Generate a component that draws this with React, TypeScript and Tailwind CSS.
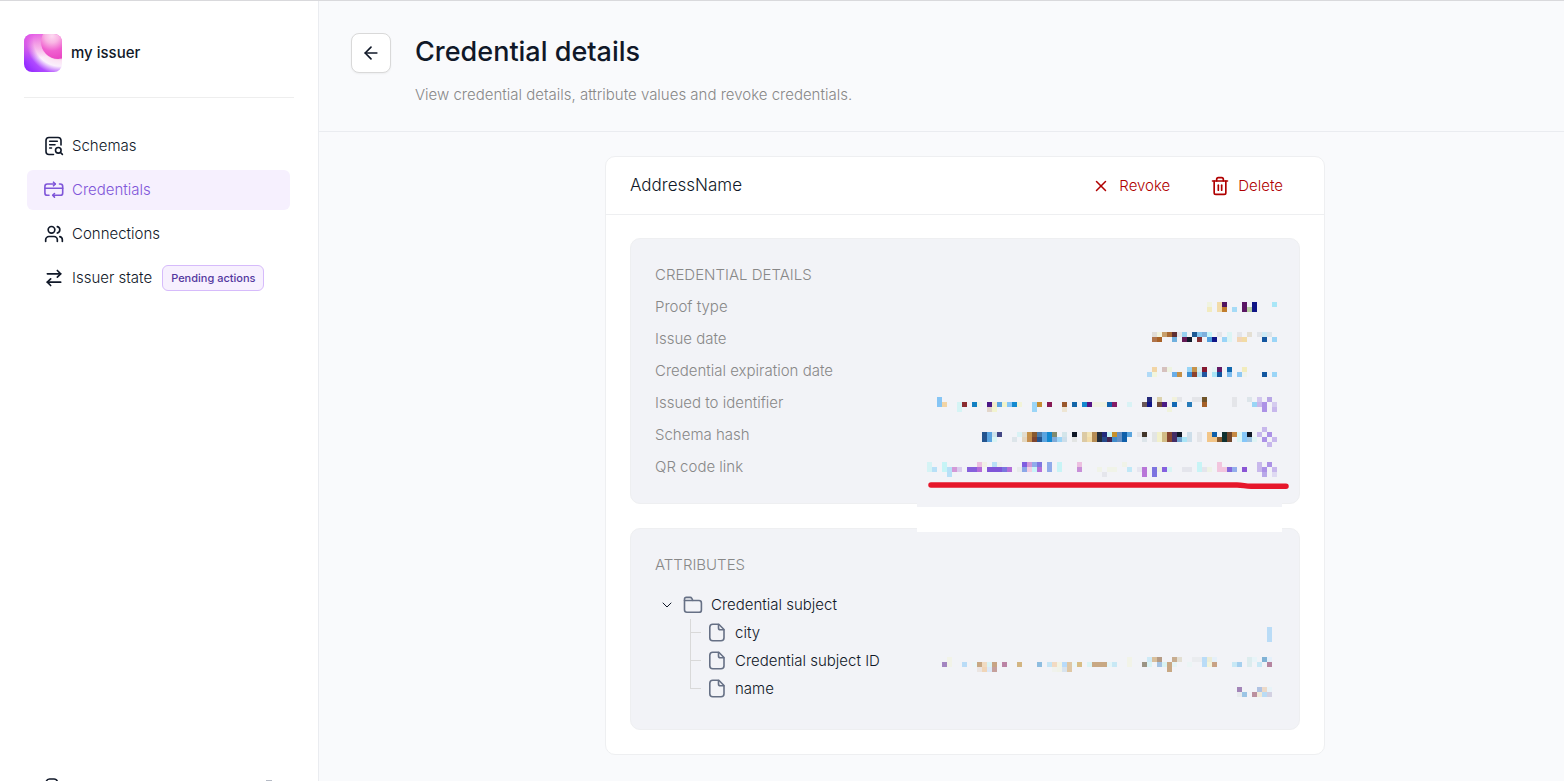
import React from "react";
import { ArrowLeft, ArrowRightLeft, ChevronDown, Trash2, Users, X } from "lucide-react";

/* Redacted values are drawn as mosaics on a 5px grid.
   Each entry: column, row, colour, columns wide, rows high. */
type Cell = [number, number, string, number?, number?];

const proofType: Cell[] = [
  [58, 0, "f0f3e0"], [60, 0, "f2dba8", 1, 2], [61, 0, "501560"], [65, 0, "5a1663", 1, 2], [67, 0, "0f1585", 1, 2], [71, 0, "a9e6f7"],
  [58, 1, "f2ebc0"], [61, 1, "c07c2d"], [63, 1, "a6dbf7"], [66, 1, "b8cfa2"],
];

const issueDate: Cell[] = [
  [47, 0, "e1ddd8"], [48, 0, "f2f3de"], [49, 0, "c89f6a"], [50, 0, "a96a33"], [51, 0, "5f2f33"], [52, 0, "e5e6ea"], [53, 0, "98d2f1"],
  [55, 0, "1f5a94"], [56, 0, "86c6ef"], [57, 0, "7fb0dc"], [58, 0, "c6f4f8"], [60, 0, "e4e5e9"], [62, 0, "dcf4f4", 1, 2],
  [64, 0, "e4e5e9"], [66, 0, "e4dfd3"], [68, 0, "e1e4e9"], [69, 0, "cdeaf5"], [70, 0, "dde5ea"],
  [47, 1, "b0744a"], [48, 1, "a96227"], [51, 1, "70b0de"], [53, 1, "641a55"], [54, 1, "121a2c"], [56, 1, "822d31"], [58, 1, "519fdd"],
  [59, 1, "101587"], [61, 1, "9ad4f7"], [64, 1, "f2d5b5"], [65, 1, "f2dba5"], [69, 1, "1356a0"], [71, 1, "9bd5f7"],
];

const expirationDate: Cell[] = [
  [47, 0, "f2d5a6"], [49, 0, "d6c1be"], [50, 0, "eef3e1"], [54, 0, "98d5f7"], [55, 0, "c6924a"], [56, 0, "d9edf0"], [57, 0, "851830"],
  [59, 0, "e6f5f5"], [60, 0, "641a66"], [62, 0, "1267ae"], [65, 0, "f2ecbd"],
  [46, 1, "b1daf7"], [47, 1, "f2f5dd"], [51, 1, "6aaee8"], [52, 1, "c69148"], [54, 1, "3c8fd2"], [55, 1, "8d432f"], [56, 1, "b4e4f5"],
  [57, 1, "2256a0"], [59, 1, "aae5f7"], [60, 1, "1356a0"], [62, 1, "7dbcef"], [64, 1, "8fc9f3"], [65, 1, "f0f2ec"], [69, 1, "1356a0"], [71, 1, "9bd5f7"],
];

const identifier: Cell[] = [
  [4, 0, "86c5f5", 1, 2], [46, 0, "252a7a"], [48, 0, "dcd2ae"], [51, 0, "f2f2dc"], [52, 0, "e4e5e9"], [55, 0, "e4e5e9", 2], [57, 0, "70542a"],
  [63, 0, "e4e5e9", 1, 2], [66, 0, "dde5ea"], [68, 0, "d3c8ee"], [70, 0, "b8a6e6"],
  [5, 1, "f2d4a5"], [8, 1, "d5f4f5", 1, 2], [9, 1, "8a2c31"], [11, 1, "1380c2"], [12, 1, "edf4e8"], [14, 1, "4a1685"], [15, 1, "f2ebcb"],
  [16, 1, "5ba4e0"], [17, 1, "f2f3c9"], [18, 1, "88c6f6"], [19, 1, "148ad0"], [20, 1, "f2f3d8"], [23, 1, "9bd5f7", 1, 2], [24, 1, "c68d33"],
  [26, 1, "871a55"], [29, 1, "9a572c"], [31, 1, "1465a8"], [33, 1, "1488cf"], [34, 1, "551685"], [35, 1, "f0f2e0", 3], [38, 1, "1263ab"],
  [39, 1, "851c66"], [42, 1, "d9f2f5"], [45, 1, "6a5757"], [46, 1, "101587"], [48, 1, "704a38"], [49, 1, "4c1d85"], [51, 1, "1369b3"],
  [54, 1, "287bb9"], [57, 1, "a66028"], [67, 1, "9ad5f5"], [68, 1, "c8b8ec"], [69, 1, "ac92e6", 1, 2], [71, 1, "d5ccef"],
  [14, 2, "e3d6cb"], [15, 2, "f2f3cf"], [29, 2, "eee5d3"], [50, 2, "f0f3dc"], [71, 2, "c8b8ec"],
];

const schemaHash: Cell[] = [
  [69, 0, "c8b8ec"],
  [13, 1, "24548f", 1, 2], [14, 1, "5ba4e0", 1, 2], [15, 1, "cde2ea"], [16, 1, "434785"], [20, 1, "d9f2f5"], [21, 1, "e2ddcf"], [22, 1, "c6924a"],
  [23, 1, "875930"], [24, 1, "4a7bab"], [25, 1, "5ba4e0", 1, 2], [26, 1, "1489d0", 1, 2], [27, 1, "818a6d"], [29, 1, "d3e5ea"], [31, 1, "101827"],
  [33, 1, "dccaa5", 1, 2], [34, 1, "f2e3b5"], [35, 1, "b58c55", 1, 2], [36, 1, "222c3b", 1, 2], [37, 1, "212a7d"], [38, 1, "c6f4f8"],
  [39, 1, "c6902d"], [40, 1, "6590c5", 1, 2], [41, 1, "0f5faa", 1, 2], [42, 1, "5ba4dd"], [44, 1, "e4e5e9"], [45, 1, "42352a"],
  [47, 1, "e3e5e4", 1, 2], [48, 1, "f2f0ca", 1, 2], [49, 1, "d2bc86", 1, 2], [50, 1, "87452f", 1, 2], [51, 1, "432c66", 1, 2], [52, 1, "101827"],
  [54, 1, "cddeea", 1, 2], [56, 1, "e4e5e9", 1, 2], [58, 1, "f2c588", 1, 2], [59, 1, "0f5faa"], [61, 1, "0f3030", 1, 2], [62, 1, "70472d", 1, 2],
  [63, 1, "c68a44"], [64, 1, "d9f4f5", 1, 2], [65, 1, "86c6f8", 1, 2], [66, 1, "101827"], [68, 1, "c8b8ec"], [70, 1, "ac92e6"],
  [15, 2, "d9f4f5"], [19, 2, "dde5ea"], [21, 2, "e3d6be"], [22, 2, "c68f4f"], [23, 2, "7d4430"], [24, 2, "24548f"], [27, 2, "80abd8"],
  [28, 2, "9bd5f7"], [29, 2, "cddeea"], [31, 2, "e3e5e4"], [34, 2, "f2dba8"], [37, 2, "24498a"], [38, 2, "432450"], [39, 2, "408ccb"],
  [45, 2, "dde5ea"], [52, 2, "70a4d0"], [53, 2, "aae5f7"], [59, 2, "f2c588"], [60, 2, "885a2d"], [66, 2, "a0c5e3"], [67, 2, "e0f4f5"],
  [69, 2, "ac92e6"], [71, 2, "c8b8ec"], [70, 3, "c8b8ec"],
];

const qrLink: Cell[] = [
  [2, 0, "d5f3f5", 1, 2], [5, 0, "c6f4f6", 1, 2], [12, 0, "ecbfe0"], [13, 0, "f0f0e5"], [15, 0, "b8e0f7"], [16, 0, "eef1ee"], [21, 0, "7f5ee0"],
  [22, 0, "d099d8"], [23, 0, "90abea"], [24, 0, "7f76e0"], [26, 0, "90abea", 1, 2], [28, 0, "c8f4f6", 1, 2], [32, 0, "ecbfe0"],
  [41, 0, "f0f3e8"], [56, 0, "c8f4f6", 1, 2], [60, 0, "f2c5de", 1, 2], [68, 0, "c8b8ec", 1, 2], [70, 0, "ac92e6"],
  [3, 1, "b8e0f7"], [6, 1, "b8e0f7", 1, 2], [7, 1, "d399d8"], [8, 1, "dacced"], [10, 1, "8660dc", 2], [12, 1, "b46bd8"], [14, 1, "7f55d8", 3],
  [17, 1, "7a76de"], [18, 1, "b46fd8"], [20, 1, "e8ebec"], [21, 1, "8ba7e8"], [22, 1, "f2cfe2"], [23, 1, "c8f4f8"], [24, 1, "b46fd8"],
  [32, 1, "c88fd8"], [36, 1, "f0f3e8"], [38, 1, "f0f3e8", 2], [42, 1, "c0e8f7"], [44, 1, "e6e6f0"], [45, 1, "b876d8", 1, 2],
  [47, 1, "7d74e0", 1, 2], [48, 1, "eef3e5"], [49, 1, "8560e0"], [50, 1, "d9f5f5"], [53, 1, "e4e5ec", 2], [57, 1, "e4e5ec"], [58, 1, "eef3e5"],
  [61, 1, "f2c5de"], [62, 1, "8468dc"], [63, 1, "93aeec"], [65, 1, "8a55d5"], [69, 1, "ac92e6"], [71, 1, "c8b8ec"],
  [37, 2, "e5e6ec"], [69, 2, "b8a8e8"], [71, 2, "dfdaf2"],
];

const city: Cell[] = [[70, 0, "badcf7", 1, 3]];

const subjectId: Cell[] = [
  [6, 0, "f2f3e8", 1, 2], [42, 0, "f2f3e8", 1, 2], [46, 0, "ceeaf7"], [47, 0, "d9bf9c"], [48, 0, "b59b85"], [51, 0, "c8ad90"], [52, 0, "e3dfd3"],
  [55, 0, "eaecef", 2], [57, 0, "badcf7", 1, 2], [58, 0, "ebecd8"], [59, 0, "e5f0fa"], [66, 0, "dcecee", 1, 2], [67, 0, "e8f4f8"],
  [69, 0, "80b2d5"], [70, 0, "e5f0fa"],
  [5, 1, "a385c0"], [9, 1, "badcf7"], [11, 1, "ebf6f8"], [12, 1, "c8a884"], [13, 1, "f0dbc2"], [14, 1, "daf3f5"], [15, 1, "c7a484"],
  [17, 1, "bb84a5"], [20, 1, "d3b582"], [24, 1, "8ebde0"], [26, 1, "c6e5f5"], [27, 1, "f2dac2"], [28, 1, "f2f3e2"], [29, 1, "b8dbfa"],
  [30, 1, "dfc7a5", 1, 2], [31, 1, "ebf6f5"], [32, 1, "d8bd85"], [34, 1, "d9f3f5"], [35, 1, "c8a884", 3], [38, 1, "e5f5f8"], [39, 1, "c8e8f5"],
  [45, 1, "9c9485"], [46, 1, "daf3f5"], [48, 1, "a5c3e3"], [49, 1, "d9f3f3"], [50, 1, "c8a884", 1, 2], [51, 1, "e5f3f5"], [54, 1, "ebf5f5"],
  [58, 1, "f2f3dc"], [59, 1, "c8a285"], [63, 1, "c8e8f5"], [64, 1, "a5cfee"], [68, 1, "c8e8f5"], [70, 1, "b585a0"],
  [12, 2, "ebe5e2"], [13, 2, "f0d5b8"], [14, 2, "dce8f8"], [15, 2, "c5a09c"], [27, 2, "f0f2ed"], [28, 2, "f0f2e8"], [29, 2, "d8e3ee"],
];

const personName: Cell[] = [
  [64, 0, "a385b8"], [68, 0, "b0c3e3"], [69, 0, "edd9c8"], [70, 0, "e8f3f8"],
  [64, 1, "e8ebee"], [65, 1, "9cc5e5"], [67, 1, "bb909f"], [68, 1, "f0e9d8"], [69, 1, "badcf5"], [70, 1, "d3d1e2"],
];

function Mosaic({ cells, top, height }: { cells: Cell[]; top: number; height: number }) {
  return (
    <svg width="360" height={height} shapeRendering="crispEdges" aria-hidden="true" className="shrink-0">
      {cells.map(([col, row, color, w = 1, h = 1]) => (
        <rect key={`${col}-${row}`} x={col * 5} y={top + row * 5} width={w * 5} height={h * 5} fill={`#${color}`} />
      ))}
    </svg>
  );
}

const stroke = {
  width: 20,
  height: 20,
  viewBox: "0 0 20 20",
  fill: "none",
  stroke: "currentColor",
  strokeWidth: 1.6,
  strokeLinecap: "round" as const,
  strokeLinejoin: "round" as const,
  "aria-hidden": true,
};

const SchemaIcon = () => (
  <svg {...stroke} className="shrink-0">
    <path d="M17 9V4.500c0-2-1-3-3-3H5c-2 0-3 1-3 3v11c0 2 1 3 3 3h4.500" />
    <path d="M5.700 5.300h7.600M5.700 8.700h5.300M5.700 12h1.800" />
    <circle cx="14.300" cy="14.300" r="2.800" />
    <path d="m16.500 16.500 1.900 1.900" />
  </svg>
);

const CredentialIcon = () => (
  <svg {...stroke} className="shrink-0">
    <path d="M5 15.300H3.300c-1.600 0-2.400-.8-2.400-2.400V6.400C.9 4.800 1.700 4 3.300 4h8M15.500 4h.8c1.600 0 2.400.8 2.400 2.400v6.500c0 1.600-.8 2.400-2.400 2.400H9" />
    <path d="M.9 8.300h17.800" />
    <path d="m9.500 2.200 1.800 1.800-1.800 1.800M10.500 13.500l-1.800 1.800 1.800 1.800" />
  </svg>
);

const FolderIcon = () => (
  <svg {...stroke} className="shrink-0 text-[#667085]">
    <path d="M1.500 14.800V4.200c0-1.200.6-1.800 1.800-1.800h3.800c.8 0 1.300.3 1.700 1l1 2.100h6.200c1.600 0 2.400.8 2.400 2.400v7c0 1.600-.8 2.400-2.400 2.400H3.900c-1.600 0-2.400-.8-2.400-2.500Z" />
    <path d="M1.500 5.500h8.300" />
  </svg>
);

const FileIcon = () => (
  <svg {...stroke} className="shrink-0 text-[#667085]">
    <path d="M11.800 1.300H5.800C3.800 1.300 2.800 2.300 2.800 4.300v10.400c0 2 1 3 3 3h8.200c2 0 3-1 3-3V6.500Z" />
    <path d="M11.500 1.500v3.400c0 1.300.6 1.900 1.900 1.900h3.300" />
  </svg>
);

function NavItem({ icon, label, active, badge }: { icon: React.ReactNode; label: string; active?: boolean; badge?: string }) {
  return (
    <li>
      <a
        href="#"
        aria-current={active ? "page" : undefined}
        className={
          active
            ? "flex h-10 items-center gap-2 rounded-md bg-[#f6f0fe] pl-[17px] text-[#7f56d9]"
            : "flex h-10 items-center gap-2 rounded-md pl-[17px] text-[#101828]"
        }
      >
        {icon}
        <span>{label}</span>
        {badge && (
          <span className="ml-0.5 rounded-md border border-[#d6bbfb] bg-[#f7f0fe] px-2 py-[3px] text-[11px] leading-[18px] font-medium text-[#53389e]">
            {badge}
          </span>
        )}
      </a>
    </li>
  );
}

function DetailRow({ label, cells, top }: { label: string; cells: Cell[]; top: number }) {
  return (
    <div className="flex h-8 items-center justify-between">
      <dt>{label}</dt>
      <dd>
        <Mosaic cells={cells} top={top} height={32} />
      </dd>
    </div>
  );
}

function TreeLeaf({ label, cells, top, last }: { label: string; cells: Cell[]; top: number; last?: boolean }) {
  return (
    <li className="flex h-7 items-center">
      <svg width="17" height="28" stroke="#d9d9d9" fill="none" shapeRendering="crispEdges" aria-hidden="true" className="ml-[35px] shrink-0">
        <path d={last ? "M.5 0v13.500h10" : "M.5 0v28M.5 13.500h10"} />
      </svg>
      <FileIcon />
      <span className="ml-2 flex-1">{label}</span>
      <Mosaic cells={cells} top={top} height={28} />
    </li>
  );
}

export default function App() {
  return (
    <div className="flex h-screen overflow-hidden border-t border-[#d9d9dc] bg-[#f9fafc] font-['Inter',sans-serif] text-[15px] leading-5 font-light text-[#101828]">
      <aside className="flex w-[319px] shrink-0 flex-col border-r border-[#eaecf0] bg-white">
        <div className="mx-6 flex h-[97px] shrink-0 items-center gap-[9px] border-b border-[#eeeeee] pt-[7px]">
          <svg width="38" height="38" viewBox="0 0 38 38" role="img" aria-label="my issuer logo" className="shrink-0">
            <defs>
              <radialGradient id="ring" gradientUnits="userSpaceOnUse" cx="36" cy="6" r="46">
                <stop offset="0.350" stopColor="#f79adf" />
                <stop offset="0.450" stopColor="#fbe3f3" />
                <stop offset="0.570" stopColor="#fbf0fc" />
                <stop offset="0.740" stopColor="#b04bff" />
                <stop offset="1" stopColor="#8d22ff" />
              </radialGradient>
              <linearGradient id="veil" x1="0.200" y1="0" x2="0.450" y2="1">
                <stop offset="0" stopColor="#e455e6" stopOpacity="0.950" />
                <stop offset="0.300" stopColor="#ee6ad8" stopOpacity="0.550" />
                <stop offset="0.650" stopColor="#f25bd6" stopOpacity="0" />
              </linearGradient>
              <radialGradient id="ball" gradientUnits="userSpaceOnUse" cx="28" cy="2" r="23">
                <stop offset="0" stopColor="#fdd9f1" />
                <stop offset="0.300" stopColor="#f9b5e4" />
                <stop offset="0.650" stopColor="#f060d0" />
                <stop offset="1" stopColor="#ea48c4" />
              </radialGradient>
              <clipPath id="tile">
                <rect width="38" height="38" rx="8" />
              </clipPath>
            </defs>
            <g clipPath="url(#tile)">
              <rect width="38" height="38" fill="url(#ring)" />
              <rect width="38" height="38" fill="url(#veil)" />
              <circle cx="34" cy="8" r="17" fill="url(#ball)" />
            </g>
          </svg>
          <span className="font-medium">my issuer</span>
        </div>
        <nav className="flex-1 pt-7 pr-7 pl-[27px]">
          <ul className="flex flex-col gap-1">
            <NavItem icon={<SchemaIcon />} label="Schemas" />
            <NavItem icon={<CredentialIcon />} label="Credentials" active />
            <NavItem icon={<Users size={20} className="shrink-0" />} label="Connections" />
            <NavItem icon={<ArrowRightLeft size={20} className="shrink-0" />} label="Issuer state" badge="Pending actions" />
          </ul>
        </nav>
        <div className="flex h-1 shrink-0 justify-between overflow-hidden pr-[45px] pl-11" aria-hidden="true">
          <svg width="20" height="4" fill="none" stroke="#101828" strokeWidth="1.600">
            <path d="M2 5c.6-2 1.500-3 3.500-3H10c2 0 3 1 3.500 3" />
          </svg>
          <svg width="8" height="4" fill="#b5bac5">
            <rect x="1" y="3" width="6" height="1" />
          </svg>
        </div>
      </aside>

      <main className="min-w-0 flex-1">
        <header className="flex items-start gap-6 border-b border-[#eaecf0] px-8 pt-8 pb-[26px]">
          <button
            type="button"
            aria-label="Back"
            className="flex h-10 w-10 items-center justify-center rounded-lg border border-[#d9d9d9] bg-white shadow-xs"
          >
            <ArrowLeft size={20} />
          </button>
          <div>
            <h1 className="text-[27px] leading-[38px] font-medium">Credential details</h1>
            <p className="mt-[14px] text-[#888888]">View credential details, attribute values and revoke credentials.</p>
          </div>
        </header>

        <div className="pt-6 pl-[47px]">
          <section className="mx-auto max-w-[720px] rounded-[10px] border border-[#eeeff1] bg-white">
            <div className="flex h-[58px] items-center justify-between border-b border-[#eeeff1] pr-[41px] pl-6">
              <h2 className="pb-0.5 text-[17px]">AddressName</h2>
              <div className="flex gap-10 text-[#b00000]">
                <button type="button" className="flex items-center gap-2">
                  <span className="flex w-5 justify-center">
                    <X size={18} className="shrink-0" />
                  </span>
                  Revoke
                </button>
                <button type="button" className="flex items-center gap-2">
                  <Trash2 size={20} className="shrink-0" />
                  Delete
                </button>
              </div>
            </div>

            <div className="flex flex-col gap-6 px-6 pt-[23px] pb-6">
              <section className="relative rounded-[10px] border border-[#eeeff1] bg-[#f2f3f7] py-5 pr-[22px] pl-6 text-[#888888]">
                <h3 className="leading-8">CREDENTIAL DETAILS</h3>
                <dl>
                  <DetailRow label="Proof type" cells={proofType} top={11} />
                  <DetailRow label="Issue date" cells={issueDate} top={9} />
                  <DetailRow label="Credential expiration date" cells={expirationDate} top={12} />
                  <DetailRow label="Issued to identifier" cells={identifier} top={10} />
                  <DetailRow label="Schema hash" cells={schemaHash} top={8} />
                  <DetailRow label="QR code link" cells={qrLink} top={11} />
                </dl>
                {/* Marker stroke under the link, and the redaction patch that runs past the panel edge */}
                <svg width="382" height="52" aria-hidden="true" className="absolute right-0 -bottom-[29px]">
                  <rect x="0" y="20" width="365" height="7" fill="#f2f3f7" />
                  <rect x="0" y="27" width="365" height="25" fill="#ffffff" />
                  <path
                    d="M14 5H320C326 5 328 6.300 334 6.300H369"
                    fill="none"
                    stroke="#e6172b"
                    strokeWidth="5.500"
                    strokeLinecap="round"
                  />
                </svg>
              </section>

              <section className="rounded-[10px] border border-[#eeeff1] bg-[#f2f3f7] pt-5 pr-[22px] pb-[26px] pl-6">
                <h3 className="mb-[10px] leading-8 text-[#888888]">ATTRIBUTES</h3>
                <div className="flex h-7 items-center">
                  <button type="button" aria-label="Collapse Credential subject" aria-expanded="true" className="mr-2 ml-1 flex w-4 justify-center">
                    <ChevronDown size={16} strokeWidth={1.5} />
                  </button>
                  <FolderIcon />
                  <span className="ml-2">Credential subject</span>
                </div>
                <ul>
                  <TreeLeaf label="city" cells={city} top={8} />
                  <TreeLeaf label="Credential subject ID" cells={subjectId} top={10} />
                  <TreeLeaf label="name" cells={personName} top={12} last />
                </ul>
              </section>
            </div>
          </section>
        </div>
      </main>
    </div>
  );
}
